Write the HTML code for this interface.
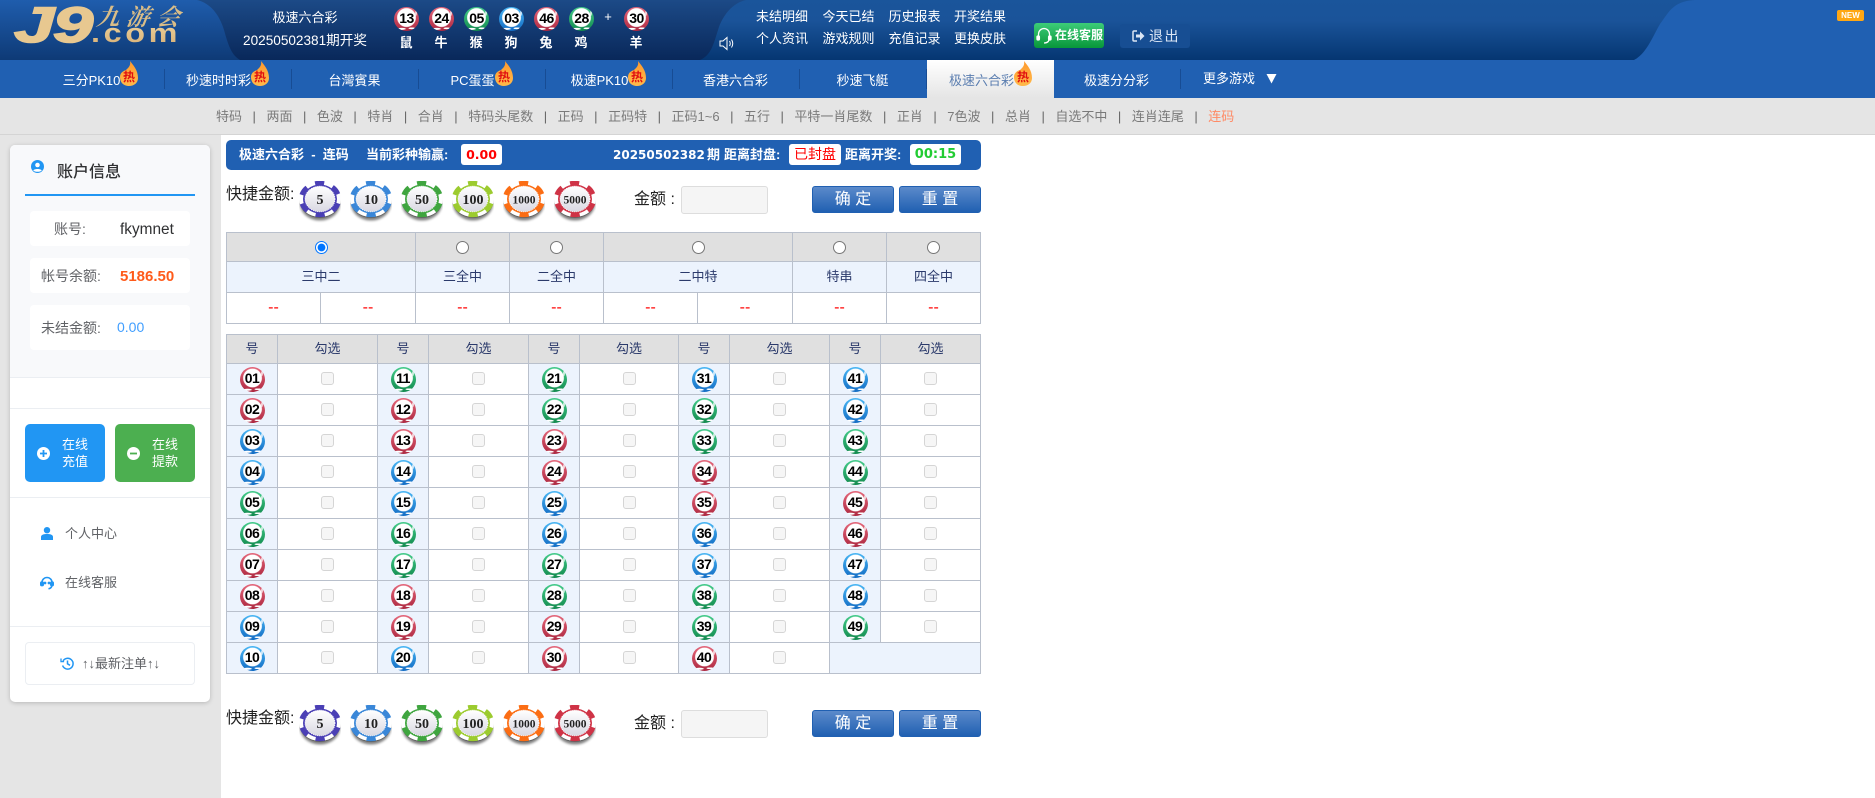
<!DOCTYPE html>
<html lang="zh">
<head>
<meta charset="utf-8">
<title>极速六合彩</title>
<style>
*{box-sizing:border-box}
html,body{margin:0;padding:0}
body{width:1875px;height:798px;position:relative;overflow:hidden;background:#fff;font-family:"Liberation Sans","Noto Sans CJK SC",sans-serif;font-size:13px;color:#333}
.a{position:absolute;white-space:nowrap}
.c{text-align:center}
.hl{color:#fff;font-size:13px;line-height:18px}
.zo{color:#fff;font-size:13px;font-weight:bold;line-height:16px;width:30px;text-align:center;top:35px}
.nav{position:absolute;top:60px;height:38px;width:127px;display:flex;align-items:center;justify-content:center;color:#fff;font-size:13px;padding-top:1px}
.nav svg{width:18px;height:25px;margin-top:-13px;flex:none}
.dv{position:absolute;top:69px;height:20px;width:1px;background:#174c94}
.sub{position:absolute;left:216px;top:98px;height:36px;line-height:37px;color:#7a7a7a;font-size:13px;white-space:nowrap}
.sub s{text-decoration:none;color:#666;padding:0 10.52px}
.row{position:absolute;left:30px;width:160px;background:#fff;border-radius:4px}
.bt{position:absolute;border:1px solid #2060b2;border-radius:3px;background:linear-gradient(#5b8acb,#2060b2);color:#fff;font-size:16px;text-align:center;height:27px;line-height:25px;width:82px}
.ipt{position:absolute;left:681px;width:87px;height:28px;background:#f5f5f5;border:1px solid #ddd;border-radius:3px}
.ch{position:absolute;width:42px;height:42px}
.ch text{font-family:"Liberation Serif",serif;font-weight:bold;fill:#222;text-anchor:middle}
table{position:absolute;left:226px;width:755px;border-collapse:collapse;table-layout:fixed}
td{border:1px solid #b9c0cc;padding:0;text-align:center;font-size:13px;color:#2b3a6b;line-height:16px}
.g{background:#e0e0e0}
.lb{background:#ecf3fd}
td.rd{color:#f00;font-size:16px}
input{margin:0;vertical-align:middle}
i.k{display:inline-block;width:13px;height:13px;background:#f6f6f6;border:1px solid #d5d5d5;border-radius:3px;vertical-align:middle;margin-top:-3px}
b.b{display:inline-block;width:25px;height:25px;border-radius:50%;font:bold 14px/22px "Liberation Sans",sans-serif;color:#000;letter-spacing:-.5px;text-align:center;vertical-align:middle;
background:radial-gradient(circle at 50% 44%,#fff 0,#fff 9px,#fff0 9.8px),radial-gradient(ellipse 5px 1.2px at 30% 91%,#fff 70%,#fff0),radial-gradient(ellipse 4px 1px at 72% 89%,#fff 70%,#fff0),radial-gradient(ellipse 1px 3px at 88% 26%,#fffc 70%,#fff0),linear-gradient(var(--x),var(--y))}
.r{--x:#e4667a;--y:#ad2840}
.u{--x:#48b6f4;--y:#136cc4}
.v{--x:#43cb8a;--y:#128a4e}
.logo{background:linear-gradient(#f5dca6,#d3aa70);-webkit-background-clip:text;background-clip:text;color:transparent}
</style>
</head>
<body>

<svg width="0" height="0" style="position:absolute">
<defs>
<linearGradient id="fg" x1="0" y1="0" x2="0" y2="1"><stop offset="0" stop-color="#ff9a2e"/><stop offset="1" stop-color="#ffb94a"/></linearGradient>
<linearGradient id="cg" x1="0" y1="0" x2="0" y2="1"><stop offset="0" stop-color="#fff"/><stop offset="1" stop-color="#d9d8e2"/></linearGradient>
<filter id="bl" x="-20%" y="-20%" width="140%" height="140%"><feGaussianBlur stdDeviation="1.4"/></filter>
<symbol id="flame" viewBox="0 0 18 25">
<path d="M10 0C13 4 18 9 18 17C18 22 14 25 9 25C3 25 0 21 0 16C0 12 3 10 6 9C8 7 11 5 10 0Z" fill="url(#fg)"/>
</symbol>
<symbol id="chip" viewBox="0 0 42 42">
<ellipse cx="21" cy="22.5" rx="20" ry="17" fill="#000" opacity=".5" filter="url(#bl)"/>
<ellipse cx="21" cy="19.5" rx="20.5" ry="17.5" fill="#5f5f5f"/>
<ellipse cx="21" cy="18" rx="21" ry="18" fill="#fff"/>
<ellipse cx="21" cy="18" rx="19" ry="16" fill="none" stroke="currentColor" stroke-width="4.4" pathLength="60" stroke-dasharray="5 5" stroke-dashoffset="-2.5"/>
<ellipse cx="21" cy="18" rx="17" ry="14.5" fill="currentColor"/>
<ellipse cx="21" cy="18" rx="15" ry="12.8" fill="url(#cg)" stroke="#fff" stroke-width=".8" stroke-dasharray="1 1"/>
</symbol>
</defs>
</svg>

<!-- HEADER BACKGROUND -->
<svg class="a" style="left:0;top:0" width="1875" height="60" viewBox="0 0 1875 60">
<defs>
<linearGradient id="h1" x1="0" y1="0" x2="0" y2="1"><stop offset="0" stop-color="#1f5dad"/><stop offset="1" stop-color="#0e3a76"/></linearGradient>
<linearGradient id="h2" x1="0" y1="0" x2="0" y2="1"><stop offset="0" stop-color="#1c4a87"/><stop offset="1" stop-color="#09285a"/></linearGradient>
<linearGradient id="h3" x1="0" y1="0" x2="0" y2="1"><stop offset="0" stop-color="#1a559b"/><stop offset=".35" stop-color="#1a5399"/><stop offset="1" stop-color="#053672"/></linearGradient>
</defs>
<rect width="1875" height="60" fill="#2060b2"/>
<rect width="250" height="60" fill="url(#h1)"/>
<path d="M690 0H1695C1672 1 1668 14 1660 24C1652 38 1646 54 1634 60H690Z" fill="url(#h3)"/>
<path d="M197 0H746C732 3 723 16 719 27C714 42 712 55 700 60H240C232 55 229 48 224 30C219 14 210 3 197 0Z" fill="url(#h2)"/>
</svg>

<!-- LOGO -->
<div class="a" style="left:14px;top:-5px;font:italic bold 50px/60px 'Liberation Sans',sans-serif;letter-spacing:-1px;color:#e8c890;-webkit-text-stroke:1.6px #e8c890;transform:scaleX(1.45);transform-origin:0 0">J9</div>
<div class="a logo" style="left:91px;top:15px;font:bold 27px/36px 'Liberation Sans',sans-serif;letter-spacing:3px;transform:scaleX(1.2);transform-origin:0 0">.com</div>
<div class="a" style="left:97px;top:4px;font:italic bold 23px/24px 'Noto Serif CJK SC',serif;color:#d9bd88;letter-spacing:7px;transform:skewX(-8deg)">九游会</div>

<!-- HEADER CENTER -->
<div class="a c" style="left:235px;top:9px;width:140px;color:#fff;font-size:13px;line-height:18px">极速六合彩</div>
<div class="a c" style="left:235px;top:32px;width:140px;color:#fff;font-size:13.6px;line-height:18px">20250502381期开奖</div>

<b class="b r a" style="left:394px;top:7px;height:24px">13</b>
<b class="b r a" style="left:429px;top:7px;height:24px">24</b>
<b class="b v a" style="left:464px;top:7px;height:24px">05</b>
<b class="b u a" style="left:499px;top:7px;height:24px">03</b>
<b class="b r a" style="left:534px;top:7px;height:24px">46</b>
<b class="b v a" style="left:569px;top:7px;height:24px">28</b>
<div class="a c" style="left:600px;top:8px;width:16px;color:#fff;font-size:13px;line-height:18px">+</div>
<b class="b r a" style="left:624px;top:7px;height:24px">30</b>
<div class="a zo" style="left:391px">鼠</div>
<div class="a zo" style="left:426px">牛</div>
<div class="a zo" style="left:461px">猴</div>
<div class="a zo" style="left:496px">狗</div>
<div class="a zo" style="left:531px">兔</div>
<div class="a zo" style="left:566px">鸡</div>
<div class="a zo" style="left:621px">羊</div>

<!-- speaker -->
<svg class="a" style="left:719px;top:36px" width="16" height="15" viewBox="0 0 16 15" fill="none" stroke="#fff" stroke-width="1">
<path d="M1 5H4L8 1.5V13.5L4 10H1Z"/><path d="M10.5 5Q12 7.5 10.5 10"/><path d="M12.5 3.5Q15 7.5 12.5 11.5"/>
</svg>

<!-- header links -->
<div class="a hl" style="left:756px;top:8px">未结明细</div>
<div class="a hl" style="left:822.5px;top:8px">今天已结</div>
<div class="a hl" style="left:888.5px;top:8px">历史报表</div>
<div class="a hl" style="left:954px;top:8px">开奖结果</div>
<div class="a hl" style="left:756px;top:30px">个人资讯</div>
<div class="a hl" style="left:822.5px;top:30px">游戏规则</div>
<div class="a hl" style="left:888.5px;top:30px">充值记录</div>
<div class="a hl" style="left:954px;top:30px">更换皮肤</div>

<!-- support / logout -->
<div class="a" style="left:1034px;top:23px;width:70px;height:25px;border-radius:3px;background:linear-gradient(#3ccc78,#08973a)"></div>
<svg class="a" style="left:1036px;top:27px" width="16" height="18" viewBox="0 0 16 18" fill="none" stroke="#fff" stroke-width="1.3">
<path d="M2.5 10V7A5.5 5.5 0 0 1 13.5 7V10"/><rect x="1" y="9" width="2.4" height="4" rx="1" fill="#fff"/><rect x="12.6" y="9" width="2.4" height="4" rx="1" fill="#fff"/><path d="M13 13Q12 16 8 16"/>
</svg>
<div class="a" style="left:1055px;top:27px;color:#fff;font-size:12px;font-weight:bold;line-height:17px">在线客服</div>
<div class="a" style="left:1120px;top:24px;width:70px;height:24px;border-radius:3px;background:#174e93"></div>
<svg class="a" style="left:1132px;top:30px" width="13" height="12" viewBox="0 0 13 12">
<path d="M5 1H2Q1 1 1 2V10Q1 11 2 11H5" fill="none" stroke="#dbe6f5" stroke-width="1.5"/><path d="M4 4.5H8V1.5L12.5 6L8 10.5V7.5H4Z" fill="#dbe6f5"/>
</svg>
<div class="a" style="left:1149px;top:27px;color:#dbe6f5;font-size:14px;line-height:18px;letter-spacing:1.5px">退出</div>

<!-- NEW -->
<div class="a c" style="left:1837px;top:10px;width:27px;height:11px;border-radius:2px;background:#ffa714;color:#fff;font:bold 8px/11px 'Liberation Sans',sans-serif">NEW</div>

<!-- NAV -->
<div class="a" style="left:0;top:60px;width:1875px;height:38px;background:#2060b2"></div>
<div class="a" style="left:927px;top:60px;width:127px;height:38px;background:linear-gradient(#fff,#e5e5e5)"></div>
<div class="dv" style="left:164px"></div><div class="dv" style="left:291px"></div><div class="dv" style="left:418px"></div><div class="dv" style="left:545px"></div><div class="dv" style="left:672px"></div><div class="dv" style="left:799px"></div><div class="dv" style="left:926px"></div><div class="dv" style="left:1180px"></div>

<div class="nav" style="left:37px">三分PK10<svg viewBox="0 0 18 25"><use href="#flame"/><text x="9" y="20" font-size="12" text-anchor="middle" fill="#e01010" font-weight="bold">热</text></svg></div>
<div class="nav" style="left:164px">秒速时时彩<svg viewBox="0 0 18 25"><use href="#flame"/><text x="9" y="20" font-size="12" text-anchor="middle" fill="#e01010" font-weight="bold">热</text></svg></div>
<div class="nav" style="left:291px">台灣賓果</div>
<div class="nav" style="left:418px">PC蛋蛋<svg viewBox="0 0 18 25"><use href="#flame"/><text x="9" y="20" font-size="12" text-anchor="middle" fill="#e01010" font-weight="bold">热</text></svg></div>
<div class="nav" style="left:545px">极速PK10<svg viewBox="0 0 18 25"><use href="#flame"/><text x="9" y="20" font-size="12" text-anchor="middle" fill="#e01010" font-weight="bold">热</text></svg></div>
<div class="nav" style="left:672px">香港六合彩</div>
<div class="nav" style="left:799px">秒速飞艇</div>
<div class="nav" style="left:927px;color:#5b7eb0">极速六合彩<svg viewBox="0 0 18 25"><use href="#flame"/><text x="9" y="20" font-size="12" text-anchor="middle" fill="#e01010" font-weight="bold">热</text></svg></div>
<div class="nav" style="left:1053px">极速分分彩</div>
<div class="a" style="left:1203px;top:70px;color:#fff;font-size:13px;line-height:18px">更多游戏</div>
<svg class="a" style="left:1266px;top:73px" width="11" height="11" viewBox="0 0 11 11"><path d="M0.5 1H10.5L5.5 10.5Z" fill="#fff"/></svg>

<!-- SUB NAV -->
<div class="a" style="left:0;top:98px;width:1875px;height:37px;background:#e5e5e5;border-bottom:1px solid #d4d4d4"></div>
<div class="sub">特码<s>|</s>两面<s>|</s>色波<s>|</s>特肖<s>|</s>合肖<s>|</s>特码头尾数<s>|</s>正码<s>|</s>正码特<s>|</s>正码1~6<s>|</s>五行<s>|</s>平特一肖尾数<s>|</s>正肖<s>|</s>7色波<s>|</s>总肖<s>|</s>自选不中<s>|</s>连肖连尾<s>|</s><span style="color:#ff8a65">连码</span></div>

<!-- SIDEBAR -->
<div class="a" style="left:0;top:135px;width:221px;height:663px;background:#e5e5e5"></div>
<div class="a" style="left:10px;top:145px;width:200px;height:557px;background:#fff;border-radius:5px;box-shadow:0 1px 5px rgba(0,0,0,.2)"></div>
<div class="a" style="left:10px;top:145px;width:200px;height:233px;background:#f8f9fb;border-radius:5px 5px 0 0;border-bottom:1px solid #ebeef2"></div>
<svg class="a" style="left:30.5px;top:159.5px" width="13" height="13" viewBox="0 0 13 13"><circle cx="6.5" cy="6.5" r="6.5" fill="#2196f3"/><circle cx="6.5" cy="5" r="2.3" fill="#fff"/><path d="M2.3 10.6C3 8.4 10 8.4 10.7 10.6C9 12.2 4 12.2 2.3 10.6Z" fill="#fff"/></svg>
<div class="a" style="left:57px;top:162px;font-size:16px;line-height:22px;color:#303133;font-weight:500">账户信息</div>
<div class="a" style="left:25px;top:194px;width:170px;height:2px;background:#2196f3"></div>

<div class="row" style="top:211px;height:35px"></div>
<div class="row" style="top:258px;height:35px"></div>
<div class="row" style="top:305px;height:45px"></div>
<div class="a" style="left:54px;top:219px;color:#606266;font-size:14px;line-height:20px">账号:</div>
<div class="a" style="left:120px;top:220px;color:#303133;font-size:15.4px;line-height:20px">fkymnet</div>
<div class="a" style="left:41px;top:266px;color:#606266;font-size:14px;line-height:20px">帐号余额:</div>
<div class="a" style="left:120px;top:267px;color:#ff5a1a;font-size:15px;font-weight:bold;line-height:20px">5186.50</div>
<div class="a" style="left:41px;top:318px;color:#606266;font-size:14px;line-height:20px">未结金额:</div>
<div class="a" style="left:117px;top:318px;color:#409eff;font-size:14px;line-height:18px">0.00</div>

<div class="a" style="left:10px;top:408px;width:200px;height:1px;background:#ebeef2"></div>
<div class="a" style="left:25px;top:424px;width:80px;height:58px;border-radius:5px;background:#2196f3"></div>
<div class="a" style="left:115px;top:424px;width:80px;height:58px;border-radius:5px;background:#4caf50"></div>
<svg class="a" style="left:36.5px;top:446.5px" width="13" height="13" viewBox="0 0 13 13"><circle cx="6.5" cy="6.5" r="6.5" fill="#fff"/><path d="M6.5 3V10M3 6.5H10" stroke="#2196f3" stroke-width="1.8"/></svg>
<svg class="a" style="left:126.5px;top:446.5px" width="13" height="13" viewBox="0 0 13 13"><circle cx="6.5" cy="6.5" r="6.5" fill="#fff"/><path d="M3 6.5H10" stroke="#4caf50" stroke-width="1.8"/></svg>
<div class="a" style="left:62px;top:436px;color:#fff;font-size:13px;line-height:17px">在线<br>充值</div>
<div class="a" style="left:152px;top:436px;color:#fff;font-size:13px;line-height:17px">在线<br>提款</div>
<div class="a" style="left:10px;top:497px;width:200px;height:1px;background:#ebeef2"></div>

<svg class="a" style="left:41px;top:527px" width="12" height="13" viewBox="0 0 12 13"><circle cx="6" cy="3.2" r="3.2" fill="#2196f3"/><path d="M0 13V10C0 7.5 3 7 6 7C9 7 12 7.5 12 10V13Z" fill="#2196f3"/></svg>
<div class="a" style="left:65px;top:525px;color:#606266;font-size:13px;line-height:18px">个人中心</div>
<svg class="a" style="left:40px;top:576px" width="14" height="14" viewBox="0 0 14 14" fill="none" stroke="#2196f3" stroke-width="1.6"><path d="M2 8V6.5A5 5 0 0 1 12 6.5V9Q12 12 8.5 12.8"/><rect x=".8" y="6" width="2.4" height="3.6" rx="1" fill="#2196f3"/><rect x="10.8" y="6" width="2.4" height="3.6" rx="1" fill="#2196f3"/><circle cx="5" cy="7" r=".6" fill="#2196f3"/><circle cx="9" cy="7" r=".6" fill="#2196f3"/></svg>
<div class="a" style="left:65px;top:574px;color:#606266;font-size:13px;line-height:18px">在线客服</div>
<div class="a" style="left:10px;top:626px;width:200px;height:1px;background:#ebeef2"></div>
<div class="a" style="left:25px;top:642px;width:170px;height:43px;border:1px solid #ebeef2;border-radius:4px"></div>
<svg class="a" style="left:60px;top:657px" width="14" height="13" viewBox="0 0 14 13" fill="none" stroke="#2196f3" stroke-width="1.5"><path d="M3 4A5.4 5.4 0 1 1 2.6 8.5"/><path d="M1 1.5V4.6H4.1" stroke-width="1.3"/><path d="M7.5 3.5V6.8L10 8.3"/></svg>
<div class="a" style="left:82px;top:655px;color:#606266;font-size:13px;line-height:18px">↑↓最新注单↑↓</div>

<!-- INFO BAR -->
<div class="a" style="left:226px;top:140px;width:755px;height:30px;background:#2060b2;border-radius:5px"></div>
<div class="a" style="left:239px;top:146px;color:#fff;font-size:13px;font-weight:bold;line-height:18px">极速六合彩&nbsp; -&nbsp; 连码</div>
<div class="a" style="left:366px;top:146px;color:#fff;font-size:13px;font-weight:bold;line-height:18px">当前彩种输赢:</div>
<div class="a c" style="left:461px;top:144px;width:41px;height:21px;background:#fff;border-radius:3px;color:#f00;font:bold 12.5px/21px 'DejaVu Sans',sans-serif">0.00</div>
<div class="a" style="left:613px;top:146px;color:#fff;font:bold 12px/18px 'DejaVu Sans','Noto Sans CJK SC',sans-serif">20250502382</div>
<div class="a" style="left:707px;top:146px;color:#fff;font-size:13px;font-weight:bold;line-height:18px">期</div>
<div class="a" style="left:724px;top:146px;color:#fff;font-size:13px;font-weight:bold;line-height:18px">距离封盘:</div>
<div class="a c" style="left:789px;top:144px;width:52px;height:21px;background:#fff;border-radius:3px;color:#f00;font-size:14px;line-height:21px">已封盘</div>
<div class="a" style="left:845px;top:146px;color:#fff;font-size:13px;font-weight:bold;line-height:18px">距离开奖:</div>
<div class="a c" style="left:910px;top:144px;width:51px;height:21px;background:#fff;border-radius:3px;color:#22cc33;font:bold 13px/21px 'DejaVu Sans',sans-serif">00:15</div>

<!-- QUICK ROW TOP -->
<div class="a" style="left:226px;top:184px;font-size:16px;line-height:22px;color:#222">快捷金额:</div>
<svg class="ch" style="left:299px;top:181px;color:#4a3fb5" viewBox="0 0 42 42"><use href="#chip"/><text x="21" y="23" font-size="14">5</text></svg>
<svg class="ch" style="left:350px;top:181px;color:#3a87d8" viewBox="0 0 42 42"><use href="#chip"/><text x="21" y="23" font-size="14">10</text></svg>
<svg class="ch" style="left:401px;top:181px;color:#3fa53f" viewBox="0 0 42 42"><use href="#chip"/><text x="21" y="23" font-size="14">50</text></svg>
<svg class="ch" style="left:452px;top:181px;color:#9ccb2f" viewBox="0 0 42 42"><use href="#chip"/><text x="21" y="23" font-size="14">100</text></svg>
<svg class="ch" style="left:503px;top:181px;color:#fb6d14" viewBox="0 0 42 42"><use href="#chip"/><text x="21" y="22.5" font-size="11.5">1000</text></svg>
<svg class="ch" style="left:554px;top:181px;color:#cf3346" viewBox="0 0 42 42"><use href="#chip"/><text x="21" y="22.5" font-size="11.5">5000</text></svg>
<div class="a" style="left:634px;top:189px;font-size:16px;line-height:22px;color:#222">金额 :</div>
<div class="ipt" style="top:186px"></div>
<div class="bt" style="left:812px;top:186px">确 定</div>
<div class="bt" style="left:899px;top:186px">重 置</div>

<!-- TABLE 1 -->
<table style="top:232px;width:754px">
<colgroup><col style="width:94px"><col style="width:95px"><col style="width:94px"><col style="width:94px"><col style="width:94px"><col style="width:95px"><col style="width:94px"><col style="width:94px"></colgroup>
<tr style="height:29px" class="g"><td colspan="2"><input type="radio" name="t" checked></td><td><input type="radio" name="t"></td><td><input type="radio" name="t"></td><td colspan="2"><input type="radio" name="t"></td><td><input type="radio" name="t"></td><td><input type="radio" name="t"></td></tr>
<tr style="height:31px" class="lb"><td colspan="2">三中二</td><td>三全中</td><td>二全中</td><td colspan="2">二中特</td><td>特串</td><td>四全中</td></tr>
<tr style="height:31px"><td class="rd">--</td><td class="rd">--</td><td class="rd">--</td><td class="rd">--</td><td class="rd">--</td><td class="rd">--</td><td class="rd">--</td><td class="rd">--</td></tr>
</table>

<!-- TABLE 2 -->
<table style="top:334px;width:754px">
<colgroup><col style="width:51px"><col style="width:100px"><col style="width:51px"><col style="width:100px"><col style="width:51px"><col style="width:99px"><col style="width:51px"><col style="width:100px"><col style="width:51px"><col style="width:100px"></colgroup>
<tr style="height:29px" class="g"><td>号</td><td>勾选</td><td>号</td><td>勾选</td><td>号</td><td>勾选</td><td>号</td><td>勾选</td><td>号</td><td>勾选</td></tr>
<tr style="height:31px"><td class="lb"><b class="b r">01</b></td><td><i class="k"></i></td><td class="lb"><b class="b v">11</b></td><td><i class="k"></i></td><td class="lb"><b class="b v">21</b></td><td><i class="k"></i></td><td class="lb"><b class="b u">31</b></td><td><i class="k"></i></td><td class="lb"><b class="b u">41</b></td><td><i class="k"></i></td></tr>
<tr style="height:31px"><td class="lb"><b class="b r">02</b></td><td><i class="k"></i></td><td class="lb"><b class="b r">12</b></td><td><i class="k"></i></td><td class="lb"><b class="b v">22</b></td><td><i class="k"></i></td><td class="lb"><b class="b v">32</b></td><td><i class="k"></i></td><td class="lb"><b class="b u">42</b></td><td><i class="k"></i></td></tr>
<tr style="height:31px"><td class="lb"><b class="b u">03</b></td><td><i class="k"></i></td><td class="lb"><b class="b r">13</b></td><td><i class="k"></i></td><td class="lb"><b class="b r">23</b></td><td><i class="k"></i></td><td class="lb"><b class="b v">33</b></td><td><i class="k"></i></td><td class="lb"><b class="b v">43</b></td><td><i class="k"></i></td></tr>
<tr style="height:31px"><td class="lb"><b class="b u">04</b></td><td><i class="k"></i></td><td class="lb"><b class="b u">14</b></td><td><i class="k"></i></td><td class="lb"><b class="b r">24</b></td><td><i class="k"></i></td><td class="lb"><b class="b r">34</b></td><td><i class="k"></i></td><td class="lb"><b class="b v">44</b></td><td><i class="k"></i></td></tr>
<tr style="height:31px"><td class="lb"><b class="b v">05</b></td><td><i class="k"></i></td><td class="lb"><b class="b u">15</b></td><td><i class="k"></i></td><td class="lb"><b class="b u">25</b></td><td><i class="k"></i></td><td class="lb"><b class="b r">35</b></td><td><i class="k"></i></td><td class="lb"><b class="b r">45</b></td><td><i class="k"></i></td></tr>
<tr style="height:31px"><td class="lb"><b class="b v">06</b></td><td><i class="k"></i></td><td class="lb"><b class="b v">16</b></td><td><i class="k"></i></td><td class="lb"><b class="b u">26</b></td><td><i class="k"></i></td><td class="lb"><b class="b u">36</b></td><td><i class="k"></i></td><td class="lb"><b class="b r">46</b></td><td><i class="k"></i></td></tr>
<tr style="height:31px"><td class="lb"><b class="b r">07</b></td><td><i class="k"></i></td><td class="lb"><b class="b v">17</b></td><td><i class="k"></i></td><td class="lb"><b class="b v">27</b></td><td><i class="k"></i></td><td class="lb"><b class="b u">37</b></td><td><i class="k"></i></td><td class="lb"><b class="b u">47</b></td><td><i class="k"></i></td></tr>
<tr style="height:31px"><td class="lb"><b class="b r">08</b></td><td><i class="k"></i></td><td class="lb"><b class="b r">18</b></td><td><i class="k"></i></td><td class="lb"><b class="b v">28</b></td><td><i class="k"></i></td><td class="lb"><b class="b v">38</b></td><td><i class="k"></i></td><td class="lb"><b class="b u">48</b></td><td><i class="k"></i></td></tr>
<tr style="height:31px"><td class="lb"><b class="b u">09</b></td><td><i class="k"></i></td><td class="lb"><b class="b r">19</b></td><td><i class="k"></i></td><td class="lb"><b class="b r">29</b></td><td><i class="k"></i></td><td class="lb"><b class="b v">39</b></td><td><i class="k"></i></td><td class="lb"><b class="b v">49</b></td><td><i class="k"></i></td></tr>
<tr style="height:31px"><td class="lb"><b class="b u">10</b></td><td><i class="k"></i></td><td class="lb"><b class="b u">20</b></td><td><i class="k"></i></td><td class="lb"><b class="b r">30</b></td><td><i class="k"></i></td><td class="lb"><b class="b r">40</b></td><td><i class="k"></i></td><td class="lb" colspan="2"></td></tr>
</table>

<!-- QUICK ROW BOTTOM -->
<div class="a" style="left:226px;top:708px;font-size:16px;line-height:22px;color:#222">快捷金额:</div>
<svg class="ch" style="left:299px;top:705px;color:#4a3fb5" viewBox="0 0 42 42"><use href="#chip"/><text x="21" y="23" font-size="14">5</text></svg>
<svg class="ch" style="left:350px;top:705px;color:#3a87d8" viewBox="0 0 42 42"><use href="#chip"/><text x="21" y="23" font-size="14">10</text></svg>
<svg class="ch" style="left:401px;top:705px;color:#3fa53f" viewBox="0 0 42 42"><use href="#chip"/><text x="21" y="23" font-size="14">50</text></svg>
<svg class="ch" style="left:452px;top:705px;color:#9ccb2f" viewBox="0 0 42 42"><use href="#chip"/><text x="21" y="23" font-size="14">100</text></svg>
<svg class="ch" style="left:503px;top:705px;color:#fb6d14" viewBox="0 0 42 42"><use href="#chip"/><text x="21" y="22.5" font-size="11.5">1000</text></svg>
<svg class="ch" style="left:554px;top:705px;color:#cf3346" viewBox="0 0 42 42"><use href="#chip"/><text x="21" y="22.5" font-size="11.5">5000</text></svg>
<div class="a" style="left:634px;top:713px;font-size:16px;line-height:22px;color:#222">金额 :</div>
<div class="ipt" style="top:710px"></div>
<div class="bt" style="left:812px;top:710px">确 定</div>
<div class="bt" style="left:899px;top:710px">重 置</div>

</body>
</html>
